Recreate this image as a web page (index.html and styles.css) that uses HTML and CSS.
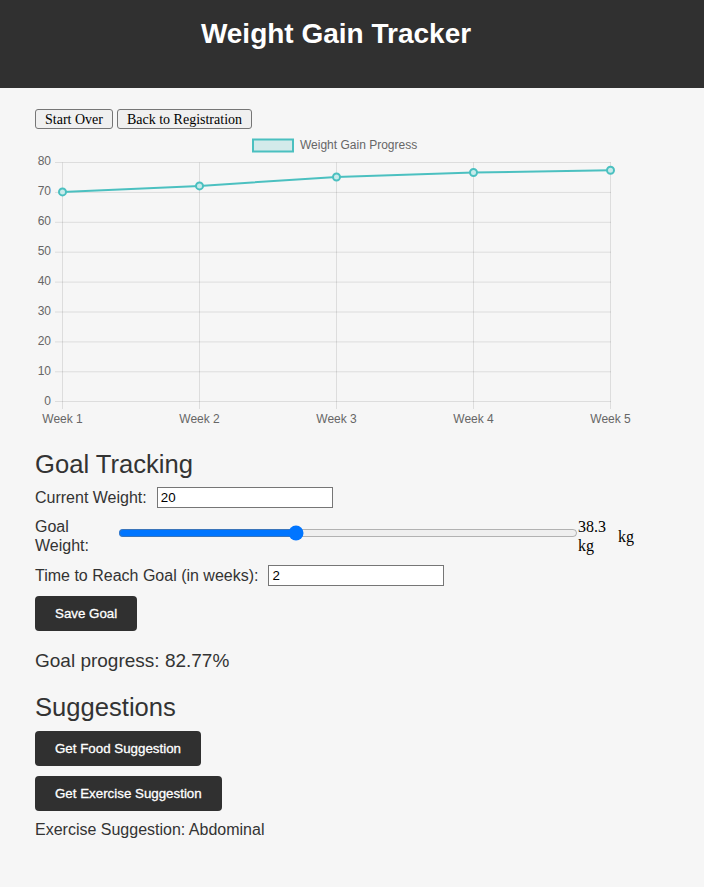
FILE: index.html
```html
<!DOCTYPE html>
<html lang="en">
<head>
<meta charset="UTF-8">
<title>Weight Gain Tracker</title>
<link rel="stylesheet" href="styles.css">
</head>
<body>
<header class="site-header">
  <h1 class="site-title">Weight Gain Tracker</h1>
</header>
<main class="container">
  <div class="nav-buttons">
    <button class="plain-btn">Start Over</button>
    <button class="plain-btn">Back to Registration</button>
  </div>

  <div class="chart">
    <svg class="chart-svg" width="600" height="300" viewBox="0 0 600 300">
      <!-- legend -->
      <rect x="218" y="10.5" width="40" height="12" fill="rgba(75,192,192,0.2)" stroke="rgb(75,192,192)" stroke-width="2"/>
      <text x="265" y="19.6" class="chart-label">Weight Gain Progress</text>

      <!-- horizontal grid -->
      <g stroke="rgba(0,0,0,0.1)" stroke-width="1">
        <line x1="20" y1="33.5" x2="576" y2="33.5"/>
        <line x1="20" y1="63.4" x2="576" y2="63.4"/>
        <line x1="20" y1="93.3" x2="576" y2="93.3"/>
        <line x1="20" y1="123.2" x2="576" y2="123.2"/>
        <line x1="20" y1="153.1" x2="576" y2="153.1"/>
        <line x1="20" y1="183" x2="576" y2="183"/>
        <line x1="20" y1="212.9" x2="576" y2="212.9"/>
        <line x1="20" y1="242.8" x2="576" y2="242.8"/>
        <line x1="20" y1="272.5" x2="576" y2="272.5"/>
      </g>
      <!-- vertical grid -->
      <g stroke="rgba(0,0,0,0.1)" stroke-width="1">
        <line x1="27.5" y1="33.5" x2="27.5" y2="280"/>
        <line x1="164.5" y1="33.5" x2="164.5" y2="280"/>
        <line x1="301.5" y1="33.5" x2="301.5" y2="280"/>
        <line x1="438.5" y1="33.5" x2="438.5" y2="280"/>
        <line x1="575.5" y1="33.5" x2="575.5" y2="280"/>
      </g>

      <!-- y labels -->
      <g class="chart-label" text-anchor="end">
        <text x="16" y="36">80</text>
        <text x="16" y="66">70</text>
        <text x="16" y="96">60</text>
        <text x="16" y="126">50</text>
        <text x="16" y="156">40</text>
        <text x="16" y="186">30</text>
        <text x="16" y="216">20</text>
        <text x="16" y="246">10</text>
        <text x="16" y="276">0</text>
      </g>
      <!-- x labels -->
      <g class="chart-label" text-anchor="middle">
        <text x="27.5" y="293.5">Week 1</text>
        <text x="164.5" y="293.5">Week 2</text>
        <text x="301.5" y="293.5">Week 3</text>
        <text x="438.5" y="293.5">Week 4</text>
        <text x="575.5" y="293.5">Week 5</text>
      </g>

      <!-- data line -->
      <polyline points="27.5,62.9 164.5,56.9 301.5,48 438.5,43.5 575.5,41.2" fill="none" stroke="rgb(75,192,192)" stroke-width="2" stroke-linejoin="round"/>
      <g fill="rgba(200,235,235,1)" stroke="rgb(75,192,192)" stroke-width="2">
        <circle cx="27.5" cy="62.9" r="3.5"/>
        <circle cx="164.5" cy="56.9" r="3.5"/>
        <circle cx="301.5" cy="48" r="3.5"/>
        <circle cx="438.5" cy="43.5" r="3.5"/>
        <circle cx="575.5" cy="41.2" r="3.5"/>
      </g>
    </svg>
  </div>

  <section class="goal-section">
    <h2 class="section-title">Goal Tracking</h2>
    <div class="form-row">
      <label class="form-label" for="cw">Current Weight:</label>
      <input class="text-input" id="cw" type="text" value="20">
    </div>
    <div class="form-row range-row">
      <label class="form-label range-label" for="gw">Goal Weight:</label>
      <input class="range-input" id="gw" type="range" min="0" max="100" step="0.1" value="38.3">
      <span class="range-value">38.3 kg</span>
      <span class="range-unit">kg</span>
    </div>
    <div class="form-row">
      <label class="form-label" for="tw">Time to Reach Goal (in weeks):</label>
      <input class="text-input" id="tw" type="text" value="2">
    </div>
    <button class="dark-btn">Save Goal</button>
    <p class="progress-text">Goal progress: 82.77%</p>
  </section>

  <section class="suggest-section">
    <h2 class="section-title">Suggestions</h2>
    <button class="dark-btn block-btn">Get Food Suggestion</button>
    <button class="dark-btn block-btn">Get Exercise Suggestion</button>
    <p class="suggest-text">Exercise Suggestion: Abdominal</p>
  </section>
</main>
</body>
</html>
```

FILE: styles.css
```css
* {
  box-sizing: border-box;
}

body {
  margin: 0;
  background: #f6f6f6;
  font-family: "Liberation Sans", Arial, sans-serif;
  color: #333;
}

.site-header {
  background: #303030;
  height: 88px;
  padding: 18px 32px 0 0;
  text-align: center;
}

.site-title {
  margin: 0;
  color: #fff;
  font-size: 28px;
  font-weight: bold;
  line-height: 32px;
}

.container {
  width: 600px;
  margin-left: 35px;
  padding-top: 21px;
}

.nav-buttons {
  display: flex;
  gap: 4px;
}

.plain-btn {
  font-family: "Liberation Serif", "Times New Roman", serif;
  font-size: 14px;
  line-height: 17px;
  padding: 1px 9px 0;
  border: 1px solid #767676;
  border-radius: 3px;
  background: #f0f0f0;
  color: #000;
}

.chart {
  height: 300px;
}

.chart-svg {
  display: block;
}

.chart-label {
  font-family: "Liberation Sans", Arial, sans-serif;
  font-size: 12px;
  fill: #666;
}

.section-title {
  font-size: 25.6px;
  font-weight: normal;
  line-height: 29.4px;
  margin: 21px 0 8px;
}

.form-row {
  display: flex;
  align-items: center;
  gap: 10px;
  margin-bottom: 10px;
  font-size: 16px;
}

.form-label {
  line-height: 18.4px;
}

.text-input {
  width: 176px;
  height: 21px;
  padding: 1px 3px;
  border: 1px solid #767676;
  background: #fff;
  font-family: "Liberation Sans", Arial, sans-serif;
  font-size: 13.33px;
  color: #000;
}

.range-row {
  gap: 0;
}

.range-label {
  width: 73px;
  margin-right: 10px;
  flex-shrink: 0;
}

.range-input {
  width: 460px;
  margin: 0 0 8px;
  flex-shrink: 0;
}

.range-value,
.range-unit {
  font-family: "Liberation Serif", "Times New Roman", serif;
  font-size: 16px;
  line-height: 18.4px;
  color: #000;
}

.range-value {
  width: 30px;
}

.range-unit {
  margin-left: 10px;
}

.dark-btn {
  background: #303030;
  color: #fff;
  border: none;
  border-radius: 4px;
  padding: 10px 20px;
  font-family: "Liberation Sans", Arial, sans-serif;
  font-size: 13.33px;
  line-height: 15px;
  -webkit-text-stroke: 0.3px #fff;
}

.block-btn {
  display: block;
  margin-bottom: 10px;
}

.progress-text {
  font-size: 19px;
  margin: 19px 0;
}

.suggest-text {
  font-size: 16px;
  margin: 8px 0;
}
```
